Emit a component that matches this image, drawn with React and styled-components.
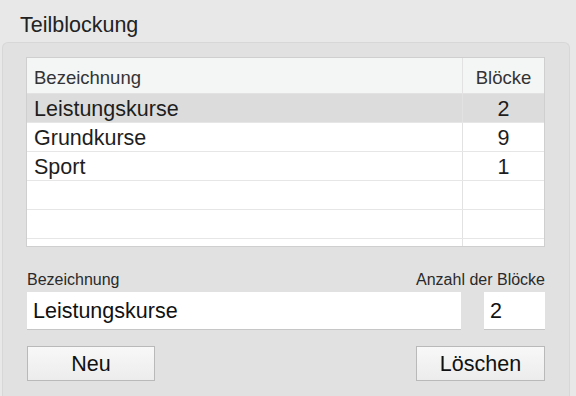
import React from "react"
import styled, { createGlobalStyle } from "styled-components"

const GlobalStyle = createGlobalStyle`
  html, body {
    margin: 0;
    padding: 0;
    background: #e8e8e8;
    font-family: "Liberation Sans", Arial, sans-serif;
    color: #1e1e1e;
    overflow: hidden;
  }
`

const Window = styled.div`
  width: 576px;
  height: 396px;
  display: flex;
  flex-direction: column;
  box-sizing: border-box;
`

const Title = styled.div`
  height: 42px;
  box-sizing: border-box;
  padding: 13px 0 0 20px;
  font-size: 21.5px;
  color: #222;
`

const GroupBox = styled.div`
  flex: 1;
  margin: 0 6px 0 2px;
  padding: 14px 24px 0 23px;
  background: #e1e1e1;
  border: 1px solid #d7d7d7;
  border-bottom: none;
  border-radius: 6px 6px 0 0;
  display: flex;
  flex-direction: column;
`

const TableBox = styled.div`
  height: 190px;
  background: #fff;
  border: 1px solid #cfcfcf;
  box-sizing: border-box;
  overflow: hidden;
`

const Row = styled.div`
  display: grid;
  grid-template-columns: 1fr 82px;
  height: ${p => (p.$head ? 36 : 29)}px;
  background: ${p => (p.$head ? "#f4f5f5" : p.$selected ? "#dcdcdc" : "#fff")};
  border-bottom: 1px solid ${p => (p.$head ? "#e2e2e2" : "#e6e6e6")};
  box-sizing: border-box;
`

const Cell = styled.div`
  display: flex;
  align-items: center;
  justify-content: ${p => (p.$center ? "center" : "flex-start")};
  padding-left: ${p => (p.$center ? 0 : 7)}px;
  padding-top: ${p => (p.$head ? 5 : 3)}px;
  border-left: ${p => (p.$center ? "1px solid #e2e2e2" : "none")};
  font-size: ${p => (p.$head ? 18.5 : 21.5)}px;
  color: ${p => (p.$head ? "#333" : "#1e1e1e")};
`

const Labels = styled.div`
  display: flex;
  justify-content: space-between;
  margin-top: 20px;
  padding-left: 1px;
  font-size: 16px;
  color: #2a2a2a;
  height: 25px;
  align-items: center;
`

const Fields = styled.div`
  display: flex;
  gap: 23px;
  padding-left: 1px;
`

const Field = styled.div`
  width: ${p => p.$width}px;
  height: 38px;
  box-sizing: border-box;
  background: #fff;
  border-bottom: 1px solid #c6c6c6;
  display: flex;
  align-items: center;
  padding: 2px 0 0 6px;
  font-size: 21.5px;
  color: #111;
`

const Buttons = styled.div`
  display: flex;
  justify-content: space-between;
  margin-top: 16px;
  padding-left: 1px;
`

const Button = styled.div`
  width: ${p => p.$width}px;
  height: 35px;
  box-sizing: border-box;
  border: 1px solid #b9b9b9;
  background: linear-gradient(#f8f8f8, #ececec);
  display: flex;
  align-items: center;
  justify-content: center;
  padding-top: 2px;
  font-size: 21.5px;
  color: #111;
`

const rows = [
  { name: "Leistungskurse", count: "2", selected: true },
  { name: "Grundkurse", count: "9" },
  { name: "Sport", count: "1" },
  { name: "", count: "" },
  { name: "", count: "" },
  { name: "", count: "" },
]

export default function App() {
  return (
    <Window>
      <GlobalStyle />
      <Title>Teilblockung</Title>
      <GroupBox>
        <TableBox>
          <Row $head>
            <Cell $head>Bezeichnung</Cell>
            <Cell $head $center>Blöcke</Cell>
          </Row>
          {rows.map((r, i) => (
            <Row key={i} $selected={r.selected}>
              <Cell>{r.name}</Cell>
              <Cell $center>{r.count}</Cell>
            </Row>
          ))}
        </TableBox>
        <Labels>
          <span>Bezeichnung</span>
          <span>Anzahl der Blöcke</span>
        </Labels>
        <Fields>
          <Field $width={434}>Leistungskurse</Field>
          <Field $width={61}>2</Field>
        </Fields>
        <Buttons>
          <Button $width={128}>Neu</Button>
          <Button $width={129}>Löschen</Button>
        </Buttons>
      </GroupBox>
    </Window>
  )
}
